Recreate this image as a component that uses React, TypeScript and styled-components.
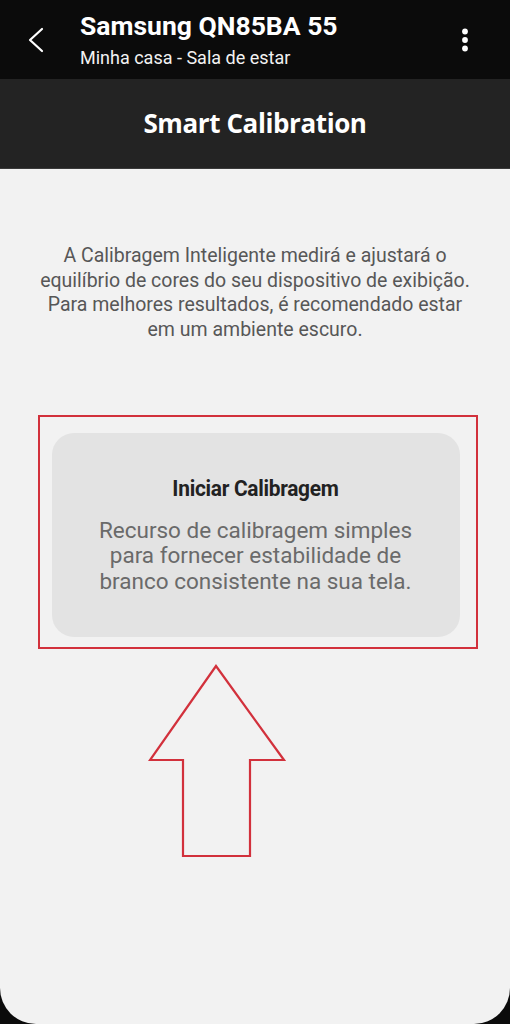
import styled, { createGlobalStyle } from "styled-components";

const GlobalStyle = createGlobalStyle`
  html, body {
    margin: 0;
    padding: 0;
    background: #0b0b0b;
  }
  * {
    box-sizing: border-box;
  }
`;

const Screen = styled.div`
  width: 510px;
  height: 1024px;
  display: flex;
  flex-direction: column;
  background: #0b0b0b;
  font-family: Roboto, "Liberation Sans", sans-serif;
`;

const TopBar = styled.div`
  height: 79px;
  display: flex;
  align-items: center;
  padding: 0 31px 0 22px;
  color: #fff;
`;

const IconButton = styled.button`
  width: 28px;
  height: 40px;
  border: none;
  background: none;
  padding: 0;
  display: flex;
  align-items: center;
  justify-content: center;
  color: #fff;
`;

const TitleBlock = styled.div`
  flex: 1;
  margin-left: 30px;
  display: flex;
  flex-direction: column;
  margin-top: 2px;
`;

const DeviceName = styled.div`
  font-size: 26.5px;
  font-weight: 700;
  line-height: 30px;
`;

const Room = styled.div`
  font-size: 18px;
  line-height: 24px;
  margin-top: 5px;
  color: #f2f2f2;
`;

const PageHeader = styled.div`
  height: 90px;
  background: #232323;
  display: flex;
  align-items: center;
  justify-content: center;
  color: #fff;
  font-family: "Open Sans", Lato, sans-serif;
  font-size: 26px;
  font-weight: 700;
  letter-spacing: -0.4px;
  padding-bottom: 1px;
  border-bottom: 1px solid #3a3a3a;
`;

const Content = styled.div`
  flex: 1;
  background: #f2f2f2;
  border-radius: 0 0 36px 36px;
  display: flex;
  flex-direction: column;
  align-items: center;
  padding-top: 75px;
`;

const Intro = styled.p`
  margin: 0;
  width: 440px;
  text-align: center;
  font-size: 19.5px;
  line-height: 24.5px;
  color: #575757;
`;

const Highlight = styled.div`
  margin-top: 73px;
  margin-left: 5px;
  width: 440px;
  height: 234px;
  border: 2px solid #d2313c;
  padding: 16px 16px 10px 12px;
`;

const Card = styled.button`
  width: 100%;
  height: 100%;
  border: none;
  border-radius: 22px;
  background: #e3e3e3;
  display: flex;
  flex-direction: column;
  align-items: center;
  justify-content: center;
  font-family: inherit;
  padding: 0;
`;

const CardTitle = styled.div`
  font-size: 22px;
  font-weight: 700;
  color: #222;
  letter-spacing: -0.3px;
  transform: scaleX(0.95);
  margin-bottom: 17px;
`;

const CardText = styled.div`
  font-size: 22.5px;
  line-height: 25.5px;
  color: #6a6a6a;
  text-align: center;
`;

const ArrowWrap = styled.div`
  margin-top: 15px;
  margin-left: -74px;
`;

export default function App() {
  return (
    <>
      <GlobalStyle />
      <Screen>
        <TopBar>
          <IconButton aria-label="Voltar">
            <svg width="18" height="26" viewBox="0 0 18 26" fill="none">
              <path d="M15 2 L3 13 L15 24" stroke="#fff" strokeWidth="2.2" strokeLinecap="round" strokeLinejoin="round" />
            </svg>
          </IconButton>
          <TitleBlock>
            <DeviceName>Samsung QN85BA 55</DeviceName>
            <Room>Minha casa - Sala de estar</Room>
          </TitleBlock>
          <IconButton aria-label="Mais opções">
            <svg width="8" height="24" viewBox="0 0 8 24">
              <circle cx="4" cy="3.5" r="2.9" fill="#fff" />
              <circle cx="4" cy="12" r="2.9" fill="#fff" />
              <circle cx="4" cy="20.5" r="2.9" fill="#fff" />
            </svg>
          </IconButton>
        </TopBar>
        <PageHeader>Smart Calibration</PageHeader>
        <Content>
          <Intro>
            A Calibragem Inteligente medirá e ajustará o equilíbrio de cores do seu dispositivo de exibição.
            Para melhores resultados, é recomendado estar em um ambiente escuro.
          </Intro>
          <Highlight>
            <Card>
              <CardTitle>Iniciar Calibragem</CardTitle>
              <CardText>
                Recurso de calibragem simples
                <br />
                para fornecer estabilidade de
                <br />
                branco consistente na sua tela.
              </CardText>
            </Card>
          </Highlight>
          <ArrowWrap>
            <svg width="140" height="196" viewBox="0 0 140 196" fill="none">
              <path
                d="M68 2 L2 96 L35 96 L35 192 L102 192 L102 96 L136 96 Z"
                stroke="#d2313c"
                strokeWidth="2.2"
                strokeLinejoin="miter"
              />
            </svg>
          </ArrowWrap>
        </Content>
      </Screen>
    </>
  );
}
